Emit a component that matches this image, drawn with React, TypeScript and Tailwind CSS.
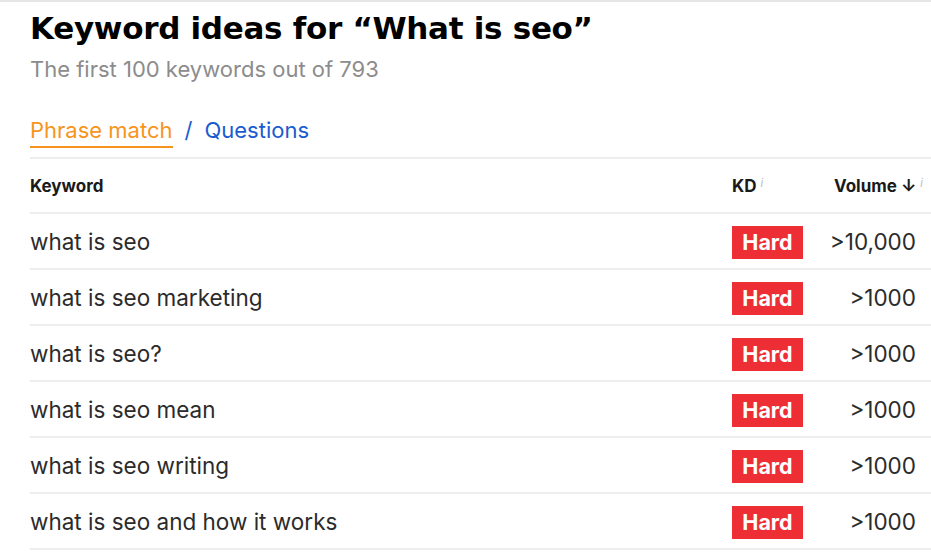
const rows: { keyword: string; volume: string }[] = [
  { keyword: "what is seo", volume: ">10,000" },
  { keyword: "what is seo marketing", volume: ">1000" },
  { keyword: "what is seo?", volume: ">1000" },
  { keyword: "what is seo mean", volume: ">1000" },
  { keyword: "what is seo writing", volume: ">1000" },
  { keyword: "what is seo and how it works", volume: ">1000" },
];

const App = () => {
  return (
    <div className="w-[931px] h-[553px] overflow-hidden bg-white border-t-2 border-[#e6e6e6] font-['Inter',sans-serif]">
      <div className="pl-[30px]">
        <h1 className="mt-[6px] text-[31px] leading-[40px] font-bold text-black font-['DejaVu_Sans',sans-serif] tracking-[-0.3px]">
          Keyword ideas for “What is seo”
        </h1>
        <p className="mt-[8px] text-[22px] leading-[26px] text-[#8c8c8c]">
          The first 100 keywords out of 793
        </p>

        <div className="mt-[34px] flex items-start gap-[12px] text-[22px] leading-[28px]">
          <span className="text-[#f7941d] border-b-2 border-[#f7941d] pb-[2px]">
            Phrase match
          </span>
          <span className="text-[#1a5ccf]">/</span>
          <span className="text-[#1a5ccf]">Questions</span>
        </div>

        <div className="mt-[9px] border-t-2 border-[#eeeeee]">
          <div className="flex items-center h-[55px] pt-[3px] border-b-2 border-[#eeeeee] text-[17px] font-bold text-[#1a1a1a]">
            <div className="flex-1">Keyword</div>
            <div className="w-[95px]">
              KD<sup className="ml-[4px] text-[11px] font-normal italic text-[#bbbbbb]">i</sup>
            </div>
            <div className="w-[104px] pr-[8px] text-right whitespace-nowrap">
              Volume ↓<sup className="ml-[4px] text-[11px] font-normal italic text-[#bbbbbb]">i</sup>
            </div>
          </div>

          {rows.map(({ keyword, volume }) => (
            <div
              key={keyword}
              className="flex items-center h-[56px] pt-[2px] border-b-2 border-[#eeeeee] text-[22.5px] text-[#2b2b2b]"
            >
              <div className="flex-1">{keyword}</div>
              <div className="w-[95px]">
                <span className="inline-flex items-center justify-center w-[71px] h-[33px] bg-[#ee2e35] text-white font-bold text-[21.5px]">
                  Hard
                </span>
              </div>
              <div className="w-[104px] pr-[15px] text-right whitespace-nowrap">{volume}</div>
            </div>
          ))}
        </div>
      </div>
    </div>
  );
};

export default App;
